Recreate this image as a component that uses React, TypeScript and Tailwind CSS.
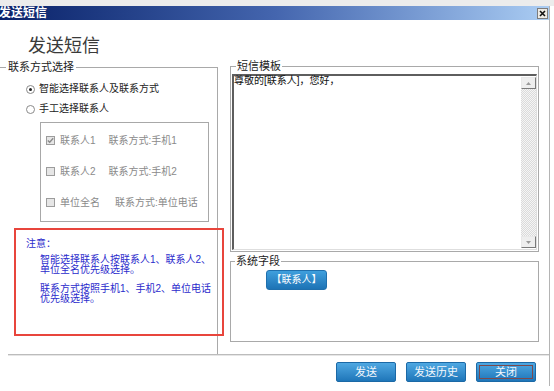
import React from "react";

function Radio({ checked, label }: { checked?: boolean; label: string }) {
  return (
    <div className="flex h-[20px] items-center gap-[4px]">
      <span className="flex h-[9px] w-[9px] items-center justify-center rounded-full border border-[#8a8a8a] bg-white">
        {checked && <span className="h-[3px] w-[3px] rounded-full bg-[#222]" />}
      </span>
      <span className="leading-[12px] text-[#222]">{label}</span>
    </div>
  );
}

function Check({ checked, label, method, gap }: { checked?: boolean; label: string; method: string; gap: string }) {
  return (
    <div className="flex h-[31px] items-center pl-[5px] text-[#8a8a8a]">
      <span className="flex h-[9px] w-[9px] items-center justify-center border border-[#9c9c9c] bg-[#e6e6e6]">
        {checked && (
          <svg width="7" height="7" viewBox="0 0 7 7">
            <path d="M0.8 3.4 L2.7 5.3 L6.2 1.2" fill="none" stroke="#8a8a8a" strokeWidth="1.4" />
          </svg>
        )}
      </span>
      <span className="ml-[5px] leading-[12px]">{label}</span>
      <span className={`${gap} leading-[12px]`}>{method}</span>
    </div>
  );
}

function BlueButton({ label, focused }: { label: string; focused?: boolean }) {
  return (
    <button
      type="button"
      className="h-[20px] w-[60px] rounded-[2px] border border-[#1b69a6] bg-linear-to-b from-[#4ea8e2] to-[#1e76b9] p-[2px] text-[11px] text-[#f4f8fc]"
    >
      <span
        className={`flex h-full w-full items-center justify-center leading-[12px] ${
          focused ? "border border-[#7a4a4e]" : ""
        }`}
      >
        {label}
      </span>
    </button>
  );
}

export default function App() {
  return (
    <div className="relative h-[391px] w-[554px] overflow-hidden bg-white font-['Liberation_Sans','Noto_Sans_CJK_SC',sans-serif] text-[10px]">
      <div className="h-[6px] bg-[#ececec]" />
      <div className="flex h-[380px] w-[550px] flex-col border-r border-[#b4b4b4]">
        {/* title bar */}
        <div className="flex h-[14px] items-center justify-between bg-linear-to-r from-[#0a2169] via-[#4465ae] to-[#abcdf3]">
          <span className="-ml-[1px] text-[12px] font-bold leading-[14px] text-white">发送短信</span>
          <span className="mr-[1px] flex h-[11px] w-[11px] items-center justify-center border border-[#7c7c7c] bg-[#eceae4]">
            <svg width="7" height="7" viewBox="0 0 7 7">
              <path d="M1 1 L6 6 M6 1 L1 6" stroke="#111" strokeWidth="1.6" />
            </svg>
          </span>
        </div>

        {/* heading */}
        <div className="h-[40px] pl-[28px] pt-[17px] text-[18px] leading-[18px] text-[#3a3a3a]">发送短信</div>

        {/* main area */}
        <div className="flex h-[294px] items-start">
          <fieldset className="mt-[1px] h-[293px] w-[218px] border-r border-t border-[#a9a9a9]">
            <legend className="ml-[6px] px-[2px] text-[11px] leading-[12px] text-[#222]">联系方式选择</legend>
            <div className="pl-[26px] pt-[6px]">
              <Radio checked label="智能选择联系人及联系方式" />
              <Radio label="手工选择联系人" />
            </div>
            <div className="ml-[40px] mt-[3px] w-[169px] border border-[#a8a8a8] pb-[3px] pt-[2px]">
              <Check checked label="联系人1" method="联系方式:手机1" gap="ml-[13px]" />
              <Check label="联系人2" method="联系方式:手机2" gap="ml-[13px]" />
              <Check label="单位全名" method="联系方式:单位电话" gap="ml-[15px]" />
            </div>
            <div className="mt-[17px] pl-[26px] leading-[10px] text-[#2b2bcc]">
              <div>注意：</div>
              <div className="ml-[14px] mt-[6px]">
                <div>智能选择联系人按联系人1、联系人2、</div>
                <div>单位全名优先级选择。</div>
              </div>
              <div className="ml-[14px] mt-[9px]">
                <div>联系方式按照手机1、手机2、单位电话</div>
                <div>优先级选择。</div>
              </div>
            </div>
          </fieldset>

          <div className="ml-[12px] flex w-[309px] flex-col">
            <fieldset className="border border-[#a9a9a9] px-[1px] pb-[1px]">
              <legend className="ml-[4px] px-[1px] text-[11px] leading-[12px] text-[#222]">短信模板</legend>
              <div className="mt-[2px] flex h-[176px] border-b border-l-2 border-r border-t-2 border-b-[#dedede] border-l-[#5e5e5e] border-r-[#dedede] border-t-[#5e5e5e] bg-white">
                <div className="flex-1 leading-[10px] text-[#111]">尊敬的[联系人]，您好，</div>
                <div className="flex w-[15px] flex-col">
                  <div className="mt-[1px] flex h-[12px] items-center justify-center border border-b-[#7a7a7a] border-l-[#e8e8e8] border-r-[#7a7a7a] border-t-[#e8e8e8] bg-[#eeeeee]">
                    <svg width="5" height="3" viewBox="0 0 5 3">
                      <path d="M0 3 L2.5 0 L5 3 Z" fill="#9a9a9a" />
                    </svg>
                  </div>
                  <div className="flex-1 bg-[repeating-conic-gradient(#dadada_0%_25%,#f5f5f5_0%_50%)] bg-[length:2px_2px]" />
                  <div className="mb-[1px] flex h-[12px] items-center justify-center border border-b-[#7a7a7a] border-l-[#e8e8e8] border-r-[#7a7a7a] border-t-[#e8e8e8] bg-[#eeeeee]">
                    <svg width="5" height="3" viewBox="0 0 5 3">
                      <path d="M0 0 L2.5 3 L5 0 Z" fill="#9a9a9a" />
                    </svg>
                  </div>
                </div>
              </div>
            </fieldset>

            <fieldset className="mt-[3px] border border-[#a9a9a9] pb-[51px]">
              <legend className="ml-[4px] px-[1px] text-[11px] leading-[12px] text-[#222]">系统字段</legend>
              <button
                type="button"
                className="ml-[35px] mt-[3px] flex h-[20px] w-[61px] items-center justify-center rounded-[3px] border border-[#1f6fad] bg-linear-to-b from-[#3f9fdd] to-[#1d73b5] text-[10px] leading-[12px] text-white"
              >
                【联系人】
              </button>
            </fieldset>
          </div>
        </div>

        {/* divider */}
        <div className="ml-[8px] border-b border-t border-b-[#e6e6e6] border-t-[#bcbcbc]" />

        {/* footer buttons */}
        <div className="flex justify-end gap-[10px] pr-[13px] pt-[6px]">
          <BlueButton label="发送" />
          <BlueButton label="发送历史" />
          <BlueButton label="关闭" focused />
        </div>
      </div>

      {/* red annotation frame */}
      <div className="absolute left-[14px] top-[228px] h-[108px] w-[210px] border-2 border-[#e8453c]" />
    </div>
  );
}
